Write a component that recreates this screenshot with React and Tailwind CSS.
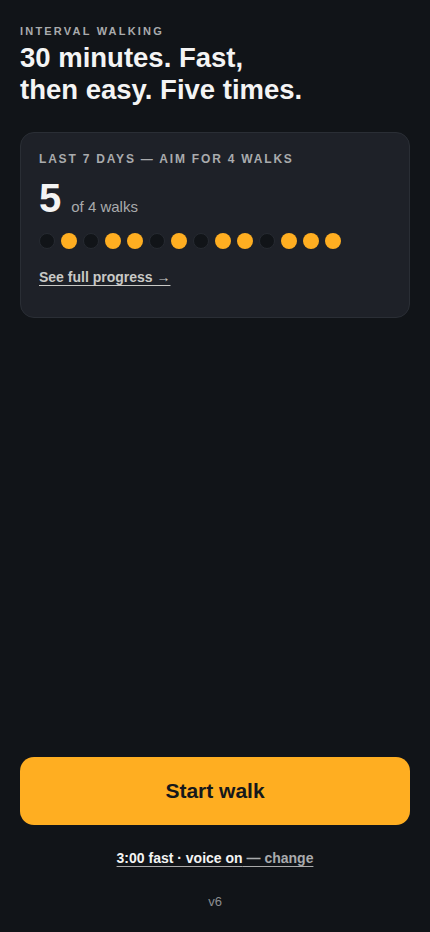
import React from 'react';

const days = [0, 1, 0, 1, 1, 0, 1, 0, 1, 1, 0, 1, 1, 1];

const App = () => {
  return (
    <div
      className="min-h-[932px] bg-[#111418] text-[#f2f2f2] flex flex-col px-5 pt-[25px] pb-[21px]"
      style={{ fontFamily: '"Liberation Sans", Arial, sans-serif' }}
    >
      <p className="text-[11px] font-bold tracking-[0.2em] text-[#a9abad] leading-[13px]">INTERVAL WALKING</p>
      <h1 className="mt-[4px] text-[27.5px] font-bold leading-[32px] text-[#f4f4f4]">
        30 minutes. Fast,
        <br />
        then easy. Five times.
      </h1>

      <div className="mt-[26px] rounded-[14px] border border-[#2a2e35] bg-[#1e2128] px-[18px] pt-[19px] pb-[29px]">
        <p className="text-[12px] font-bold tracking-[0.15em] text-[#a9abad] leading-[14px]">
          LAST 7 DAYS — AIM FOR 4 WALKS
        </p>
        <div className="mt-[12px] flex items-baseline gap-[10px]">
          <span className="text-[40px] font-bold leading-[40px] text-[#f4f4f4]">5</span>
          <span className="text-[15px] leading-none text-[#a9abad]">of 4 walks</span>
        </div>
        <div className="mt-[15px] flex gap-[6px]">
          {days.map((on, i) => (
            <span
              key={i}
              className={
                on
                  ? 'w-4 h-4 rounded-full bg-[#ffae21]'
                  : 'w-4 h-4 rounded-full bg-[#111418] border border-[#262a31]'
              }
            />
          ))}
        </div>
        <a className="mt-[18px] block w-fit text-[14px] leading-[21px] font-bold text-[#c9c9c6] underline underline-offset-[3px] decoration-[1px]">
          See full progress →
        </a>
      </div>

      <div className="mt-auto flex flex-col items-center">
        <button className="w-full h-[68px] rounded-[14px] bg-[#ffae21] text-[21px] font-bold text-[#16181b]">
          Start walk
        </button>
        <p className="mt-[23px] text-[14px] leading-[21px] font-bold underline underline-offset-[3px] decoration-[1px] decoration-[#aaaaaa]">
          <span className="text-[#f4f4f4]">3:00 fast · voice on</span>
          <span className="text-[#a9abad]"> — change</span>
        </p>
        <p className="mt-[23px] text-[13px] leading-[19.5px] text-[#8c8e90]">v6</p>
      </div>
    </div>
  );
};

export default App;
